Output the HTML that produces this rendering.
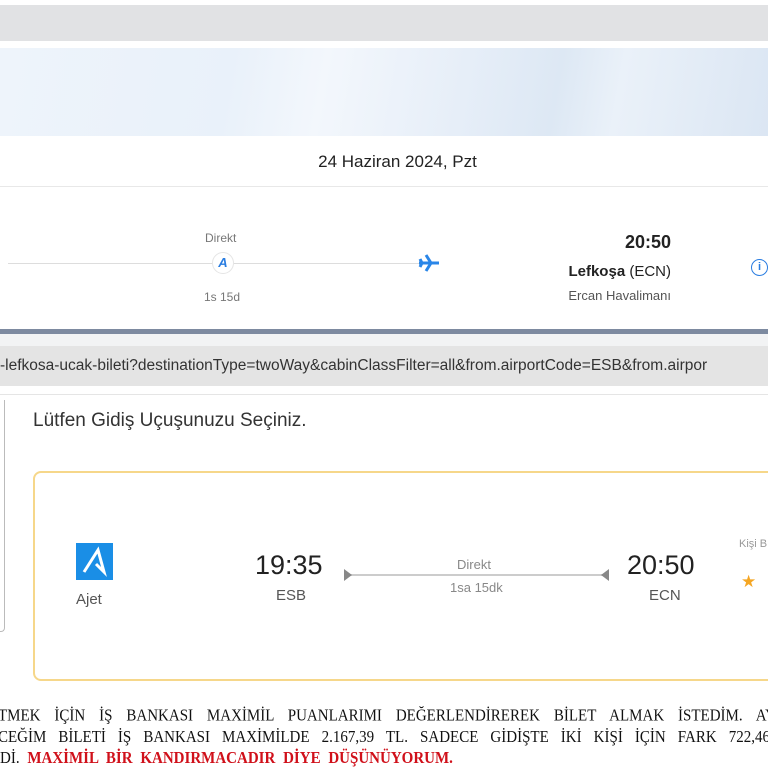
<!DOCTYPE html>
<html><head><meta charset="utf-8"><style>
*{margin:0;padding:0;box-sizing:border-box}
body{width:768px;height:768px;overflow:hidden;background:#fff;font-family:"Liberation Sans",sans-serif;position:relative}
.a{position:absolute}
.j{text-align:justify;text-align-last:justify;width:778px}
</style></head><body>
<div class="a" style="left:0;top:5px;width:768px;height:36px;background:#e1e2e4"></div>
<div class="a" style="left:0;top:48px;width:768px;height:88px;background:linear-gradient(100deg,#eef4fb 0%,#e9f1fa 30%,#f3f7fc 42%,#e6eef8 60%,#dde8f4 72%,#eaf1f9 80%,#dbe6f3 100%)"></div>
<div class="a" style="left:0;top:152px;width:768px;text-align:center;font-size:17px;color:#222;padding-left:27px">24 Haziran 2024, Pzt</div>
<div class="a" style="left:0;top:186px;width:768px;height:1px;background:#e8e8e8"></div>
<div class="a" style="left:205px;top:231px;font-size:12px;color:#777">Direkt</div>
<div class="a" style="left:8px;top:263px;width:412px;height:1px;background:#ddd"></div>
<div class="a" style="left:212px;top:252px;width:22px;height:22px;border-radius:50%;background:#fff;border:1px solid #e5e5e5;color:#2a7de1;font-size:13px;font-style:italic;font-weight:bold;text-align:center;line-height:20px">A</div>
<div class="a" style="left:204px;top:290px;font-size:12px;color:#777">1s 15d</div>
<svg class="a" style="left:417px;top:252px" width="24" height="22" viewBox="0 0 24 22"><path d="M2 11h20M9 3l5 8-5 8M3 7l2 4-2 4" stroke="#2a86e8" stroke-width="3" fill="none"/></svg>
<div class="a" style="left:540px;top:232px;width:131px;text-align:right;font-size:18px;font-weight:bold;color:#222">20:50</div>
<div class="a" style="left:520px;top:263px;width:151px;text-align:right;font-size:15px;color:#222"><b>Lefkoşa</b> (ECN)</div>
<div class="a" style="left:520px;top:288px;width:151px;text-align:right;font-size:13px;color:#555">Ercan Havalimanı</div>
<div class="a" style="left:751px;top:259px;width:17px;height:17px;border-radius:50%;border:1.5px solid #2a7de1;color:#2a7de1;font-size:11px;font-weight:bold;text-align:center;line-height:14px">i</div>
<div class="a" style="left:0;top:329px;width:768px;height:5px;background:#7d8aa0"></div>
<div class="a" style="left:0;top:334px;width:768px;height:12px;background:#f2f3f4"></div>
<div class="a" style="left:0;top:346px;width:768px;height:40px;background:#e4e4e4;font-size:15.5px;color:#333;line-height:40px;white-space:nowrap">-lefkosa-ucak-bileti?destinationType=twoWay&amp;cabinClassFilter=all&amp;from.airportCode=ESB&amp;from.airpor</div>
<div class="a" style="left:0;top:394px;width:768px;height:1px;background:#e5e5e5"></div>
<div class="a" style="left:-10px;top:400px;width:15px;height:232px;border:1px solid #bbb;border-left:none;border-top:none;border-radius:0 0 4px 0"></div>
<div class="a" style="left:33px;top:410px;font-size:19px;color:#333">Lütfen Gidiş Uçuşunuzu Seçiniz.</div>
<div class="a" style="left:33px;top:471px;width:760px;height:210px;border:2px solid #f6d78a;border-radius:8px"></div>
<svg class="a" style="left:76px;top:543px" width="37" height="37" viewBox="0 0 37 37"><rect width="37" height="37" fill="#1a8ee6"/><path d="M8 29L22 7l6 22-8-8" stroke="#fff" stroke-width="3" fill="none"/></svg>
<div class="a" style="left:76px;top:591px;font-size:15px;color:#555">Ajet</div>
<div class="a" style="left:255px;top:550px;font-size:27px;color:#222">19:35</div>
<div class="a" style="left:276px;top:587px;font-size:15px;color:#555">ESB</div>
<div class="a" style="left:344px;top:574px;width:265px;height:2px;background:#ccc"></div>
<div class="a" style="left:344px;top:569px;width:0;height:0;border-left:8px solid #888;border-top:6px solid transparent;border-bottom:6px solid transparent"></div>
<div class="a" style="left:601px;top:569px;width:0;height:0;border-right:8px solid #888;border-top:6px solid transparent;border-bottom:6px solid transparent"></div>
<div class="a" style="left:457px;top:557px;font-size:13px;color:#888">Direkt</div>
<div class="a" style="left:450px;top:580px;font-size:13px;color:#888">1sa 15dk</div>
<div class="a" style="left:627px;top:550px;font-size:27px;color:#222">20:50</div>
<div class="a" style="left:649px;top:587px;font-size:15px;color:#555">ECN</div>
<div class="a" style="left:739px;top:538px;font-size:11px;color:#999;white-space:nowrap">Kişi B</div>
<div class="a" style="left:741px;top:572px;font-size:17px;color:#f5a623">★</div>
<div class="a" style="left:0;top:706px;width:800px;font-family:'Liberation Serif',serif;font-size:15px;color:#111;line-height:19px;white-space:nowrap;transform:scaleY(1.12);transform-origin:0 0">
<div class="j" style="margin-left:-2px">TMEK İÇİN İŞ BANKASI MAXİMİL PUANLARIMI DEĞERLENDİREREK BİLET ALMAK İSTEDİM. AY</div>
<div class="j" style="margin-left:-2px;width:772px">CEĞİM BİLETİ İŞ BANKASI MAXİMİLDE 2.167,39 TL. SADECE GİDİŞTE İKİ KİŞİ İÇİN FARK 722,46</div>
<div style="word-spacing:4px">Dİ. <b style="color:#d0101a">MAXİMİL BİR KANDIRMACADIR DİYE DÜŞÜNÜYORUM.</b></div>
</div>
</body></html>
